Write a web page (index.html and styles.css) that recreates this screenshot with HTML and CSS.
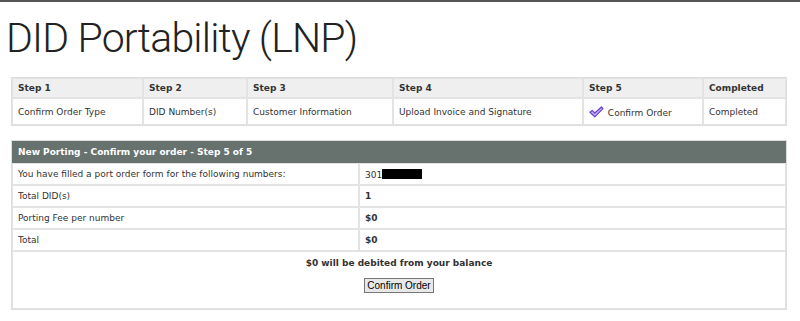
FILE: index.html
```html
<!DOCTYPE html>
<html lang="en">
  <head>
    <meta charset="UTF-8" />
    <title>DID Portability (LNP)</title>
    <link rel="stylesheet" href="styles.css">
  </head>
  <body>
    <div class="topbar"></div>
    <h1>DID Portability (LNP)</h1>

    <table class="steps">
      <tr>
        <th class="c1">Step 1</th>
        <th class="c2">Step 2</th>
        <th class="c3">Step 3</th>
        <th class="c4">Step 4</th>
        <th class="c5">Step 5</th>
        <th>Completed</th>
      </tr>
      <tr>
        <td>Confirm Order Type</td>
        <td>DID Number(s)</td>
        <td>Customer Information</td>
        <td>Upload Invoice and Signature</td>
        <td class="current">
          <svg class="check" width="15" height="12" viewBox="0 0 15 12">
            <path d="M1 6.2 L3.2 4.4 L5.8 7 L12.4 1 L14 2.6 L5.8 10.8 Z" fill="#c2b0f4" stroke="#6a3fd0" stroke-width="1.2" stroke-linejoin="round" />
          </svg>
          Confirm Order
        </td>
        <td>Completed</td>
      </tr>
    </table>

    <table class="order">
      <colgroup>
        <col class="label-col">
        <col>
      </colgroup>
      <tr>
        <th colspan="2">New Porting - Confirm your order - Step 5 of 5</th>
      </tr>
      <tr>
        <td>You have filled a port order form for the following numbers:</td>
        <td>301<span class="redacted"></span></td>
      </tr>
      <tr>
        <td>Total DID(s)</td>
        <td class="val">1</td>
      </tr>
      <tr>
        <td>Porting Fee per number</td>
        <td class="val">$0</td>
      </tr>
      <tr>
        <td>Total</td>
        <td class="val">$0</td>
      </tr>
      <tr>
        <td colspan="2" class="summary">
          <p>$0 will be debited from your balance</p>
          <button type="button">Confirm Order</button>
        </td>
      </tr>
    </table>
  </body>
</html>
```

FILE: styles.css
```css
body {
  margin: 0;
  font-family: "DejaVu Sans", Verdana, sans-serif;
  font-size: 9px;
  color: #222;
  background: #fff;
}
.topbar {
  height: 2px;
  background: #555;
}
h1 {
  font-family: Roboto, "Liberation Sans", sans-serif;
  font-weight: 300;
  font-size: 41px;
  letter-spacing: -0.8px;
  color: #222;
  margin: 8px 0 0 6px;
  line-height: 56px;
}
table {
  border-collapse: separate;
  border-spacing: 0;
  table-layout: fixed;
  margin-left: 11px;
  width: 776px;
  border: 1px solid #ddd;
}
td, th {
  border: 1px solid #e3e3e3;
  text-align: left;
  padding: 0 5px;
}
.steps {
  margin-top: 11px;
}
.steps th {
  background: #efefef;
  height: 18px;
  font-weight: bold;
  color: #333;
}
.steps td {
  height: 24px;
  padding-top: 1px;
  color: #333;
}
.steps .c1 { width: 119px; }
.steps .c2 { width: 92px; }
.steps .c3 { width: 134px; }
.steps .c4 { width: 178px; }
.steps .c5 { width: 108px; }
.check {
  vertical-align: -2px;
  margin-right: 1px;
}
.order {
  margin-top: 14px;
}
.order .label-col {
  width: 347px;
}
.order th {
  background: #67726e;
  color: #fff;
  height: 20px;
  font-weight: bold;
  border-color: #67726e;
}
.order td {
  height: 20px;
  color: #333;
}
.order .val {
  font-weight: bold;
}
.redacted {
  display: inline-block;
  width: 40px;
  height: 10px;
  background: #000;
  vertical-align: -1px;
}
.order .summary {
  text-align: center;
  height: auto;
  padding: 6px 0 15px;
}
.summary p {
  margin: 0 0 10px;
  font-weight: bold;
}
.summary button {
  font-family: "Liberation Sans", Arial, sans-serif;
  font-size: 10px;
  padding: 1px 2px;
  background: #e8e8e8;
  border: 1px solid #777;
  border-radius: 0;
  color: #000;
}
```
